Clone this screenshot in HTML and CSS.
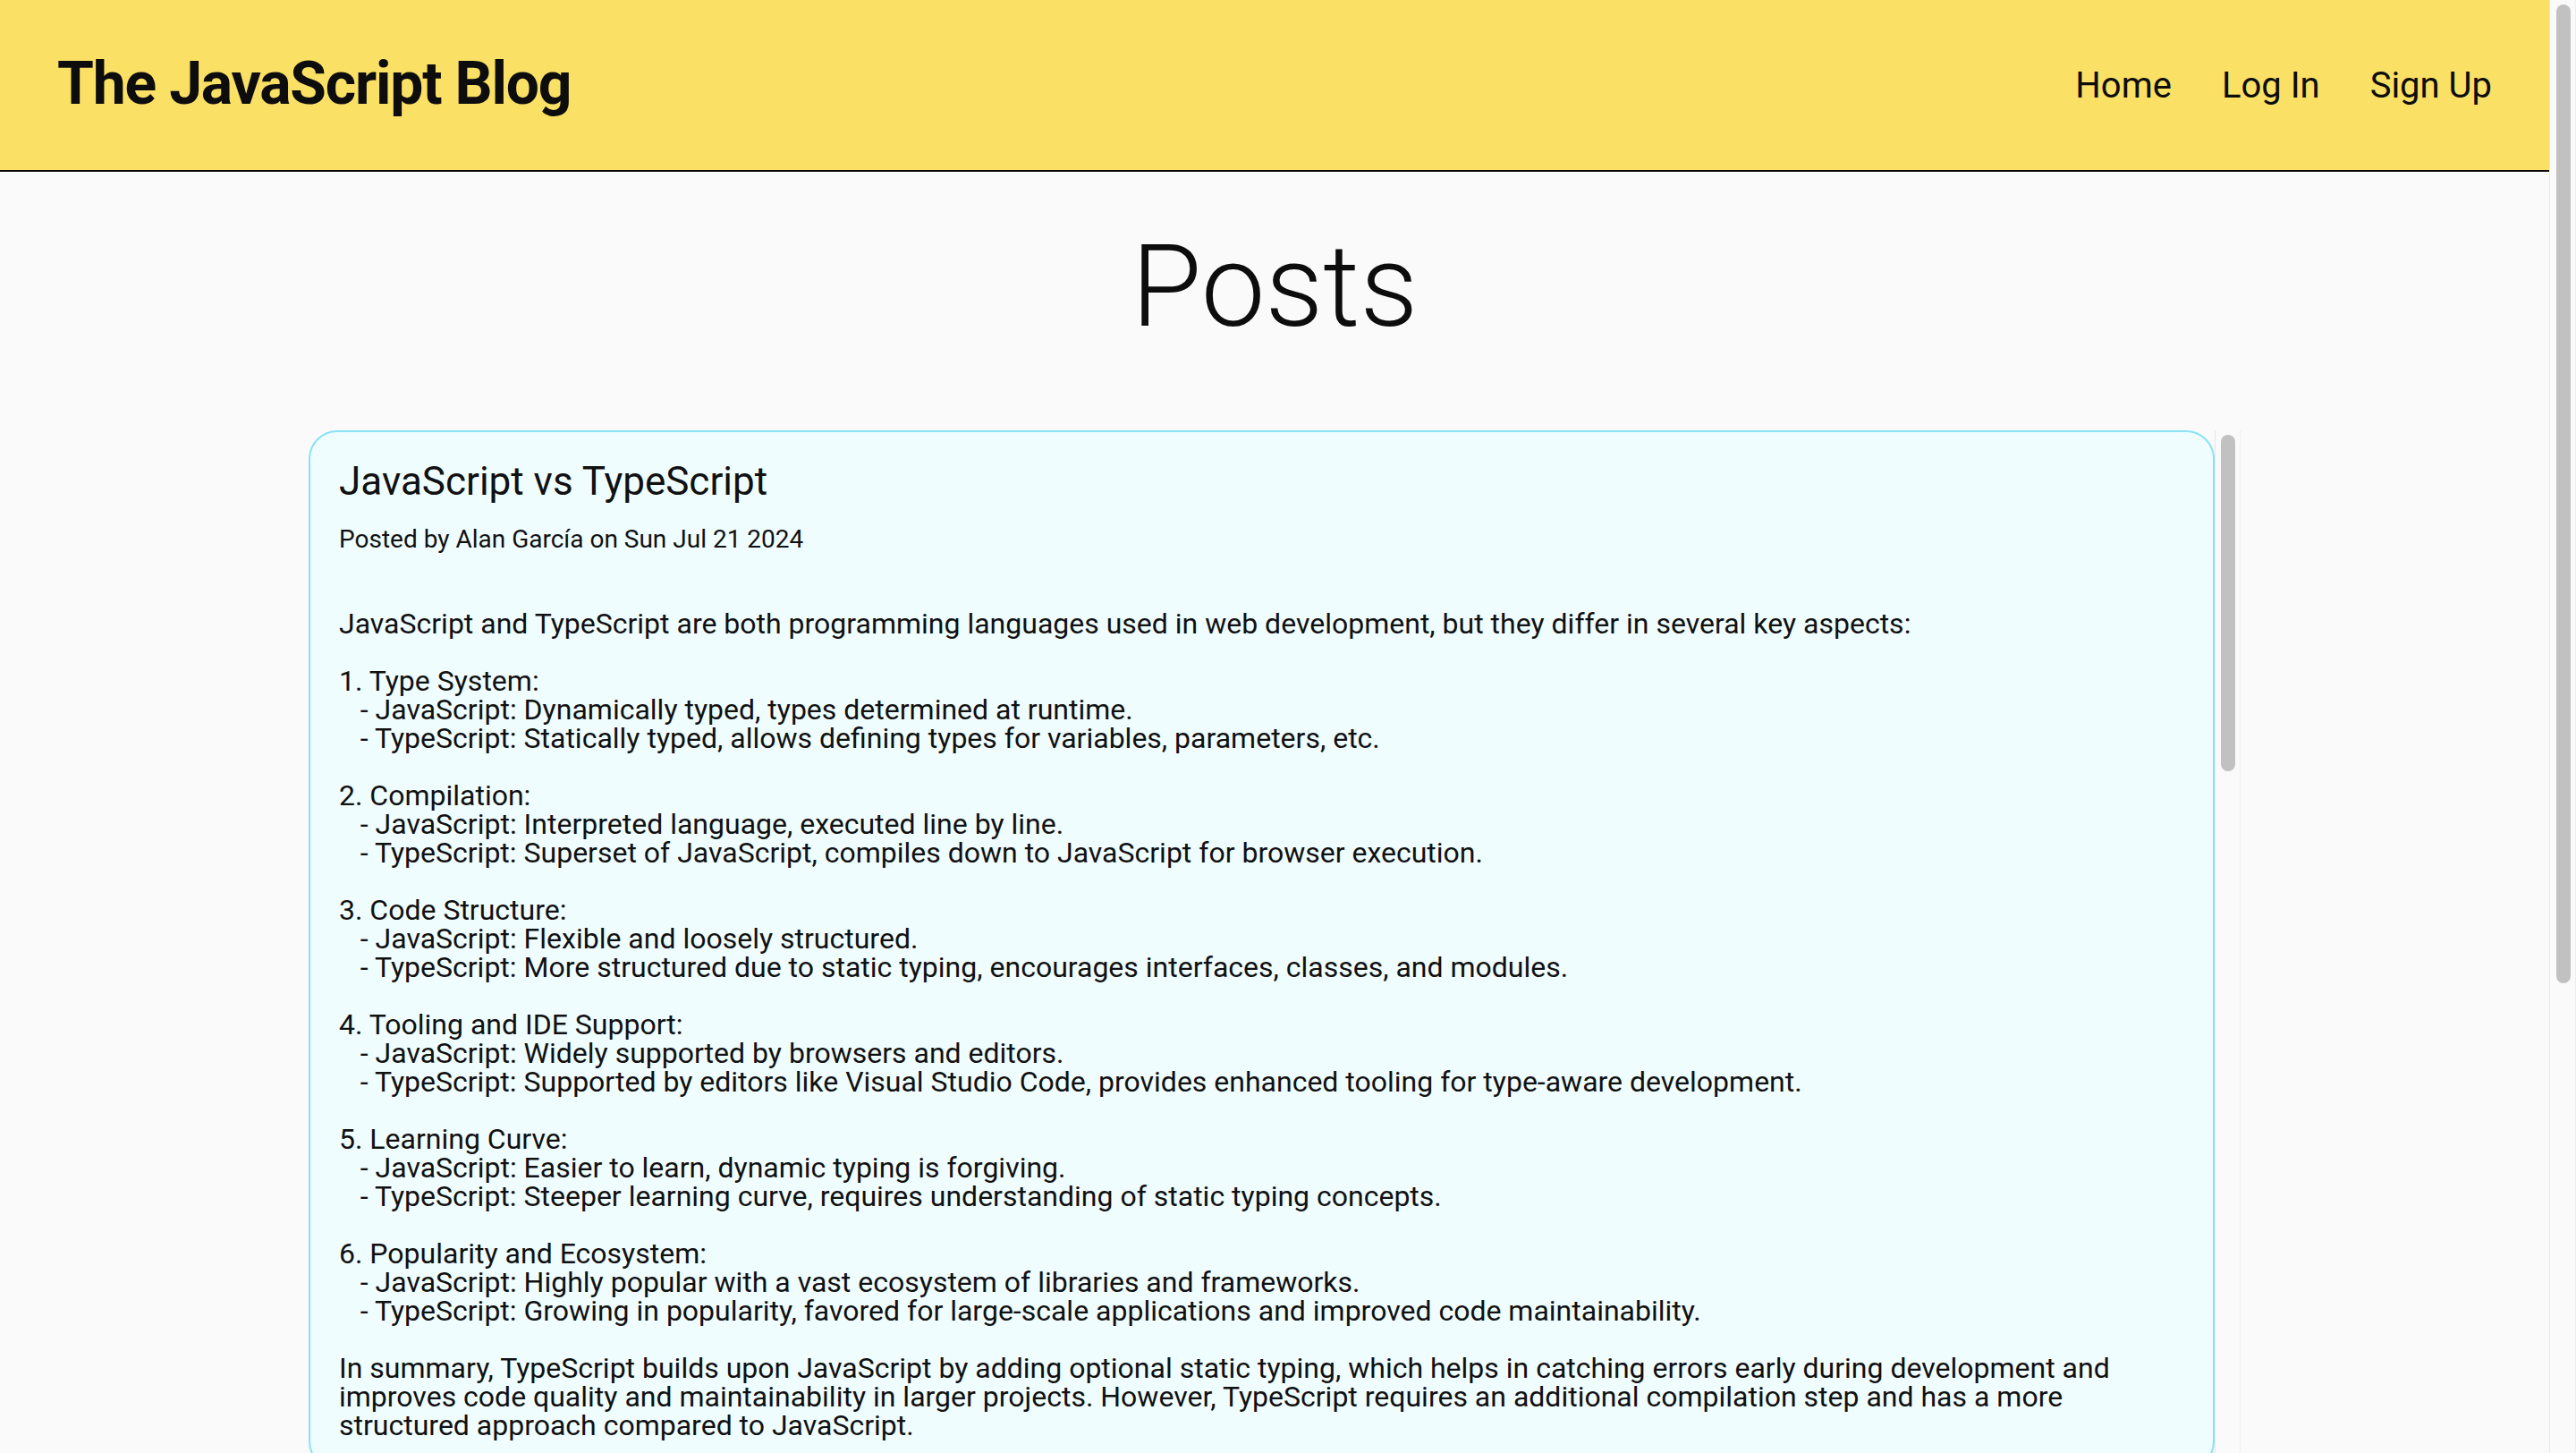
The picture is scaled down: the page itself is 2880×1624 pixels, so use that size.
FILE: index.html
```html
<!DOCTYPE html>
<html lang="en">
<head>
<meta charset="utf-8">
<title>The JavaScript Blog</title>
<link rel="stylesheet" href="styles.css">
</head>
<body>
<div class="viewport">
  <header class="topbar">
    <a class="brand" href="#">The JavaScript Blog</a>
    <nav class="nav">
      <a class="nav-link" href="#">Home</a>
      <a class="nav-link" href="#">Log In</a>
      <a class="nav-link" href="#">Sign Up</a>
    </nav>
  </header>
  <main class="page">
    <h1 class="page-title">Posts</h1>
    <section class="posts">
      <div class="posts-list">
        <article class="post">
          <h2 class="post-title">JavaScript vs TypeScript</h2>
          <p class="post-meta">Posted by Alan García on Sun Jul 21 2024</p>
          <p class="post-body">JavaScript and TypeScript are both programming languages used in web development, but they differ in several key aspects:

1. Type System:
   - JavaScript: Dynamically typed, types determined at runtime.
   - TypeScript: Statically typed, allows defining types for variables, parameters, etc.

2. Compilation:
   - JavaScript: Interpreted language, executed line by line.
   - TypeScript: Superset of JavaScript, compiles down to JavaScript for browser execution.

3. Code Structure:
   - JavaScript: Flexible and loosely structured.
   - TypeScript: More structured due to static typing, encourages interfaces, classes, and modules.

4. Tooling and IDE Support:
   - JavaScript: Widely supported by browsers and editors.
   - TypeScript: Supported by editors like Visual Studio Code, provides enhanced tooling for type-aware development.

5. Learning Curve:
   - JavaScript: Easier to learn, dynamic typing is forgiving.
   - TypeScript: Steeper learning curve, requires understanding of static typing concepts.

6. Popularity and Ecosystem:
   - JavaScript: Highly popular with a vast ecosystem of libraries and frameworks.
   - TypeScript: Growing in popularity, favored for large-scale applications and improved code maintainability.

In summary, TypeScript builds upon JavaScript by adding optional static typing, which helps in catching errors early during development and improves code quality and maintainability in larger projects. However, TypeScript requires an additional compilation step and has a more structured approach compared to JavaScript.</p>
        </article>
      </div>
      <div class="scrollbar scrollbar--posts" aria-hidden="true"><div class="scrollbar-thumb"></div></div>
    </section>
  </main>
</div>
<div class="scrollbar scrollbar--page" aria-hidden="true"><div class="scrollbar-thumb"></div></div>
</body>
</html>
```

FILE: styles.css
```css
html {
  height: 100%;
  background: #fafafa;
}

body {
  margin: 0;
  height: 100vh;
  overflow: hidden;
  display: flex;
  background: #fafafa;
  color: #111111;
  font-family: Roboto, "Noto Sans", "Liberation Sans", sans-serif;
}

.viewport {
  flex: 1;
  min-width: 0;
  display: flex;
  flex-direction: column;
}

/* header */
.topbar {
  flex: none;
  height: 190px;
  display: flex;
  align-items: center;
  justify-content: space-between;
  padding: 0 64px;
  background: #fae064;
  border-bottom: 2px solid #0a0a0a;
}

.brand {
  font-size: 66px;
  font-weight: 700;
  letter-spacing: -0.018em;
  color: #0d0d0d;
  text-decoration: none;
  margin-bottom: 4px;
}

.nav {
  display: flex;
  align-items: center;
  gap: 56px;
}

.nav-link {
  font-size: 40px;
  color: #0d0d0d;
  text-decoration: none;
}

/* page */
.page {
  flex: 1;
  min-height: 0;
  display: flex;
  flex-direction: column;
  align-items: center;
}

.page-title {
  flex: none;
  margin: 53px 0 86px;
  font-size: 128px;
  line-height: 150px;
  font-weight: 300;
  text-align: center;
  color: #0d0d0d;
}

.posts {
  flex: 1;
  min-height: 0;
  width: 2160px;
  display: flex;
}

.posts-list {
  flex: 1;
  min-width: 0;
  overflow: hidden;
}

.post {
  background: #effdff;
  border: 2px solid #88e2f4;
  border-radius: 32px;
  padding: 27px 32px 32px;
}

.post-title {
  margin: 0;
  font-size: 44px;
  line-height: 56px;
  font-weight: 400;
}

.post-meta {
  margin: 20px 0 0;
  font-size: 28px;
  line-height: 33px;
}

.post-body {
  margin: 62px 0 0;
  font-size: 32px;
  line-height: 32px;
  white-space: pre-wrap;
}

/* drawn scrollbars */
.scrollbar {
  flex: none;
  box-sizing: border-box;
  background: #fafafa;
  border-left: 1px solid #e6e6e6;
  border-right: 1px solid #eeeeee;
}

.scrollbar--page {
  width: 30px;
  height: 100vh;
  padding: 5px 0 0 7px;
}

.scrollbar--posts {
  width: 29px;
  padding: 5px 0 0 6px;
}

.scrollbar-thumb {
  width: 16px;
  border-radius: 8px;
  background: #c1c1c1;
}

.scrollbar--page .scrollbar-thumb {
  height: 1094px;
}

.scrollbar--posts .scrollbar-thumb {
  height: 376px;
}
```
